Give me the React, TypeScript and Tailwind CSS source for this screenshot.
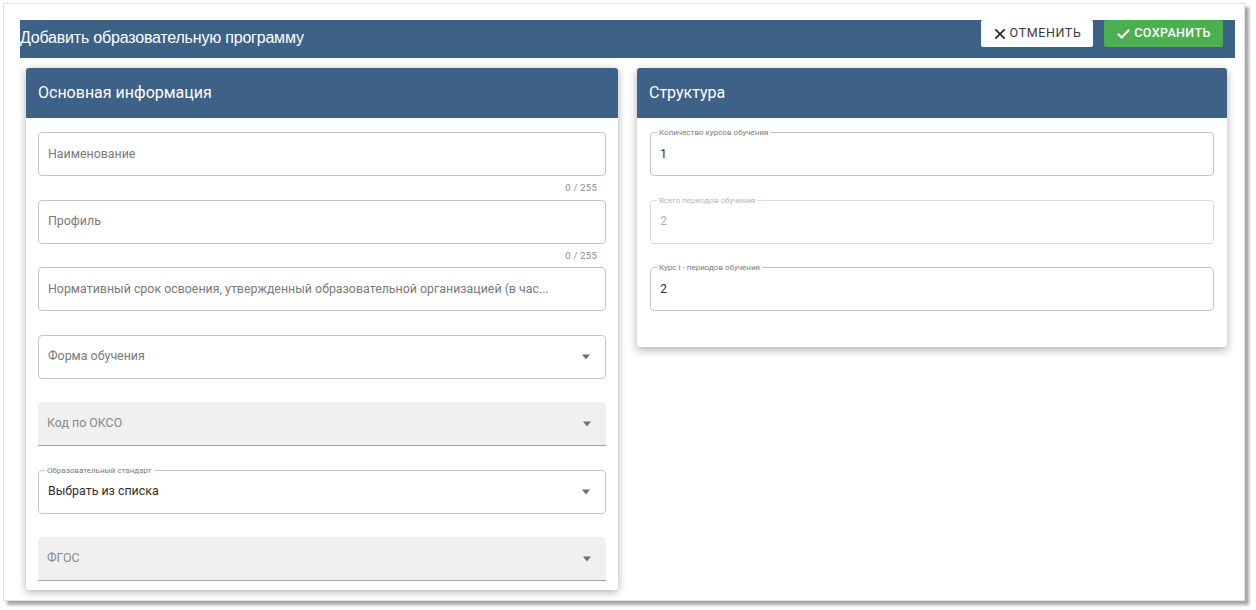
import React from "react";

const font = { fontFamily: "Roboto, 'Noto Sans', sans-serif" };

function Arrow() {
  return (
    <span className="absolute right-[15px] top-1/2 -translate-y-1/2 w-0 h-0 border-x-[4px] border-x-transparent border-t-[5px] border-t-[#6f6f6f]" />
  );
}

function Outlined({
  placeholder,
  counter,
  select,
}: {
  placeholder: string;
  counter?: boolean;
  select?: boolean;
}) {
  return (
    <div className="relative">
      <div className="relative h-[44px] border border-[#c4c4c4] rounded-[4px] flex items-center pl-[9px] pr-[34px]">
        <span className="text-[12.4px] text-[#7a7a7a] whitespace-nowrap">{placeholder}</span>
        {select && <Arrow />}
      </div>
      {counter && (
        <span className="absolute right-[9px] top-full mt-[5px] text-[9.5px] text-[#8a8a8a] tracking-wide">
          0 / 255
        </span>
      )}
    </div>
  );
}

function Filled({ placeholder }: { placeholder: string }) {
  return (
    <div className="relative h-[44px] bg-[#f0f0f0] rounded-t-[4px] border-b border-b-[#a3a3a3] flex items-center pl-[9px]">
      <span className="text-[12.4px] text-[#8a8a8a]">{placeholder}</span>
      <Arrow />
    </div>
  );
}

function Labeled({
  label,
  value,
  select,
  disabled,
}: {
  label: string;
  value: string;
  select?: boolean;
  disabled?: boolean;
}) {
  return (
    <div
      className={
        "relative h-[44px] border rounded-[4px] flex items-center pl-[9px] " +
        (disabled ? "border-[#dcdcdc]" : "border-[#c4c4c4]")
      }
    >
      <span
        className={
          "absolute -top-[6px] left-[6px] bg-white px-[2px] text-[8px] leading-[11px] " +
          (disabled ? "text-[#b5b5b5]" : "text-[#7a7a7a]")
        }
      >
        {label}
      </span>
      <span className={"text-[12.4px] " + (disabled ? "text-[#b0b0b0]" : "text-[#2f2f2f]")}>
        {value}
      </span>
      {select && <Arrow />}
    </div>
  );
}

export default function App() {
  return (
    <div className="w-[1256px] h-[610px] bg-white pt-[3px] pl-[3px]" style={font}>
      <div className="w-[1242px] h-[598px] bg-white border border-[#e2e2e2] shadow-[4px_4px_3px_rgba(0,0,0,0.35)] overflow-hidden pt-[16px] pl-[16px]">
        {/* Top bar */}
        <div className="w-[1215px] h-[38px] bg-[#3d6187] flex justify-between items-start pr-[12px]">
          <div
            className="text-white text-[16px] pt-[6px] tracking-[-0.2px]"
            style={{ fontFamily: "'Liberation Sans', Arial, sans-serif" }}
          >
            Добавить образовательную программу
          </div>
          <div className="flex gap-[11px]">
            <button className="h-[27px] w-[112px] bg-white rounded-[2px] flex items-center justify-center gap-[3px] text-[12.5px] text-[#3a3a3a] tracking-[0.6px]">
              <svg width="14" height="14" viewBox="0 0 24 24" fill="none" stroke="#2a2a2a" strokeWidth="3" strokeLinecap="butt">
                <path d="M4 4 L20 20 M20 4 L4 20" />
              </svg>
              ОТМЕНИТЬ
            </button>
            <button className="h-[27px] w-[119px] bg-[#4caf50] rounded-[2px] flex items-center justify-center gap-[3px] text-[12.5px] text-white font-medium tracking-[0.4px]">
              <svg width="15" height="15" viewBox="0 0 24 24" fill="none" stroke="#ffffff" strokeWidth="3.2">
                <path d="M3 12.5 L9 18.5 L21 6" />
              </svg>
              СОХРАНИТЬ
            </button>
          </div>
        </div>

        {/* Cards */}
        <div className="flex items-start gap-[19px] mt-[10px] ml-[6px]">
          <div className="w-[592px] h-[522px] bg-white rounded-[3px] shadow-[0_2px_8px_rgba(0,0,0,0.32)] overflow-hidden">
            <div className="h-[50px] bg-[#3d6187] flex items-center px-[12px] text-white text-[16px]">
              Основная информация
            </div>
            <div className="px-[12px] pt-[14px] flex flex-col gap-[23.5px]">
              <Outlined placeholder="Наименование" counter />
              <Outlined placeholder="Профиль" counter />
              <Outlined placeholder="Нормативный срок освоения, утвержденный образовательной организацией (в час..." />
              <Outlined placeholder="Форма обучения" select />
              <Filled placeholder="Код по ОКСО" />
              <Labeled label="Образовательный стандарт" value="Выбрать из списка" select />
              <Filled placeholder="ФГОС" />
            </div>
          </div>

          <div className="w-[590px] h-[279px] bg-white rounded-[3px] shadow-[0_3px_8px_rgba(0,0,0,0.32)] overflow-hidden">
            <div className="h-[50px] bg-[#3d6187] flex items-center px-[12px] text-white text-[16px]">
              Структура
            </div>
            <div className="px-[13px] pt-[14px] flex flex-col gap-[23.5px]">
              <Labeled label="Количество курсов обучения" value="1" />
              <Labeled label="Всего периодов обучения" value="2" disabled />
              <Labeled label="Курс I - периодов обучения" value="2" />
            </div>
          </div>
        </div>
      </div>
    </div>
  );
}
